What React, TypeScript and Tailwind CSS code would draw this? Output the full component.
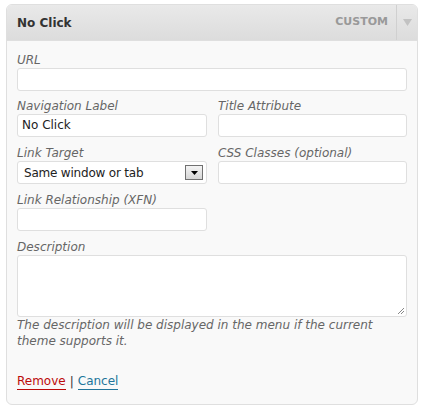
import React from 'react';

const font = { fontFamily: '"DejaVu Sans", Verdana, sans-serif' };

const Label: React.FC<{ children: React.ReactNode }> = ({ children }) => (
  <div className="text-[12px] italic text-[#666] leading-[15px]">{children}</div>
);

const TextBox: React.FC<{ value?: string; className?: string }> = ({ value, className }) => (
  <div
    className={`h-[23px] bg-white border border-[#dfdfdf] rounded-[3px] px-[4px] text-[12px] text-[#222] leading-[21px] ${className || ''}`}
  >
    {value}
  </div>
);

export default function App() {
  return (
    <div className="w-[427px] h-[408px] bg-white pt-[4px] pl-[6px]" style={font}>
      <div className="w-[412px] h-[401px] border border-[#dfdfdf] rounded-[6px] bg-[#f9f9f9] overflow-hidden flex flex-col">
        <div className="shrink-0 h-[36px] flex items-stretch bg-gradient-to-b from-[#e9e9e9] to-[#dcdcdc] border-b border-[#dfdfdf]">
          <div className="flex-1 flex items-center pl-[10px] text-[12px] font-bold text-[#333]">No Click</div>
          <div className="flex items-center pr-[8px] text-[11px] font-bold text-[#999]">CUSTOM</div>
          <div className="w-[21px] border-l border-[#d0d0d0] flex items-center justify-center">
            <svg width="9" height="7" viewBox="0 0 9 7">
              <path d="M0 0 H9 L4.5 7 Z" fill="#c2c2c2" />
            </svg>
          </div>
        </div>
        <div className="flex-1 px-[10px] pt-[12px]">
          <Label>URL</Label>
          <TextBox className="w-[390px]" />
          <div className="flex gap-[11px] mt-[8px]">
            <div className="w-[190px]">
              <Label>Navigation Label</Label>
              <TextBox value="No Click" />
            </div>
            <div className="w-[189px]">
              <Label>Title Attribute</Label>
              <TextBox />
            </div>
          </div>
          <div className="flex gap-[11px] mt-[9px]">
            <div className="w-[190px]">
              <Label>Link Target</Label>
              <div className="h-[23px] bg-white border border-[#dfdfdf] rounded-[3px] pl-[6px] pr-[3px] flex items-center justify-between text-[12px] text-[#222]">
                <span className="tracking-[-0.2px]">Same window or tab</span>
                <span className="w-[18px] h-[15px] border border-[#707070] bg-gradient-to-b from-[#f4f4f4] to-[#d6d6d6] flex items-center justify-center">
                  <svg width="7" height="4" viewBox="0 0 7 4">
                    <path d="M0 0 H7 L3.5 4 Z" fill="#000" />
                  </svg>
                </span>
              </div>
            </div>
            <div className="w-[189px]">
              <Label>CSS Classes (optional)</Label>
              <TextBox />
            </div>
          </div>
          <div className="mt-[9px] w-[190px]">
            <Label>Link Relationship (XFN)</Label>
            <TextBox />
          </div>
          <div className="mt-[9px]">
            <Label>Description</Label>
            <div className="relative w-[390px] h-[62px] bg-white border border-[#dfdfdf] rounded-[3px]">
              <svg className="absolute right-[1px] bottom-[1px]" width="8" height="8" viewBox="0 0 8 8">
                <path d="M7 1 L1 7 M7 4 L4 7" stroke="#888" strokeWidth="1" />
              </svg>
            </div>
            <div className="text-[12px] italic text-[#666] leading-[16px] w-[370px]">
              The description will be displayed in the menu if the current theme supports it.
            </div>
          </div>
          <div className="mt-[24px] text-[12px] leading-[16px] flex items-center">
            <span className="text-[#bc0b0b] border-b border-[#bc0b0b]">Remove</span>
            <span className="text-[#333] mx-[4px]">|</span>
            <span className="text-[#21759b] border-b border-[#21759b]">Cancel</span>
          </div>
        </div>
      </div>
    </div>
  );
}
